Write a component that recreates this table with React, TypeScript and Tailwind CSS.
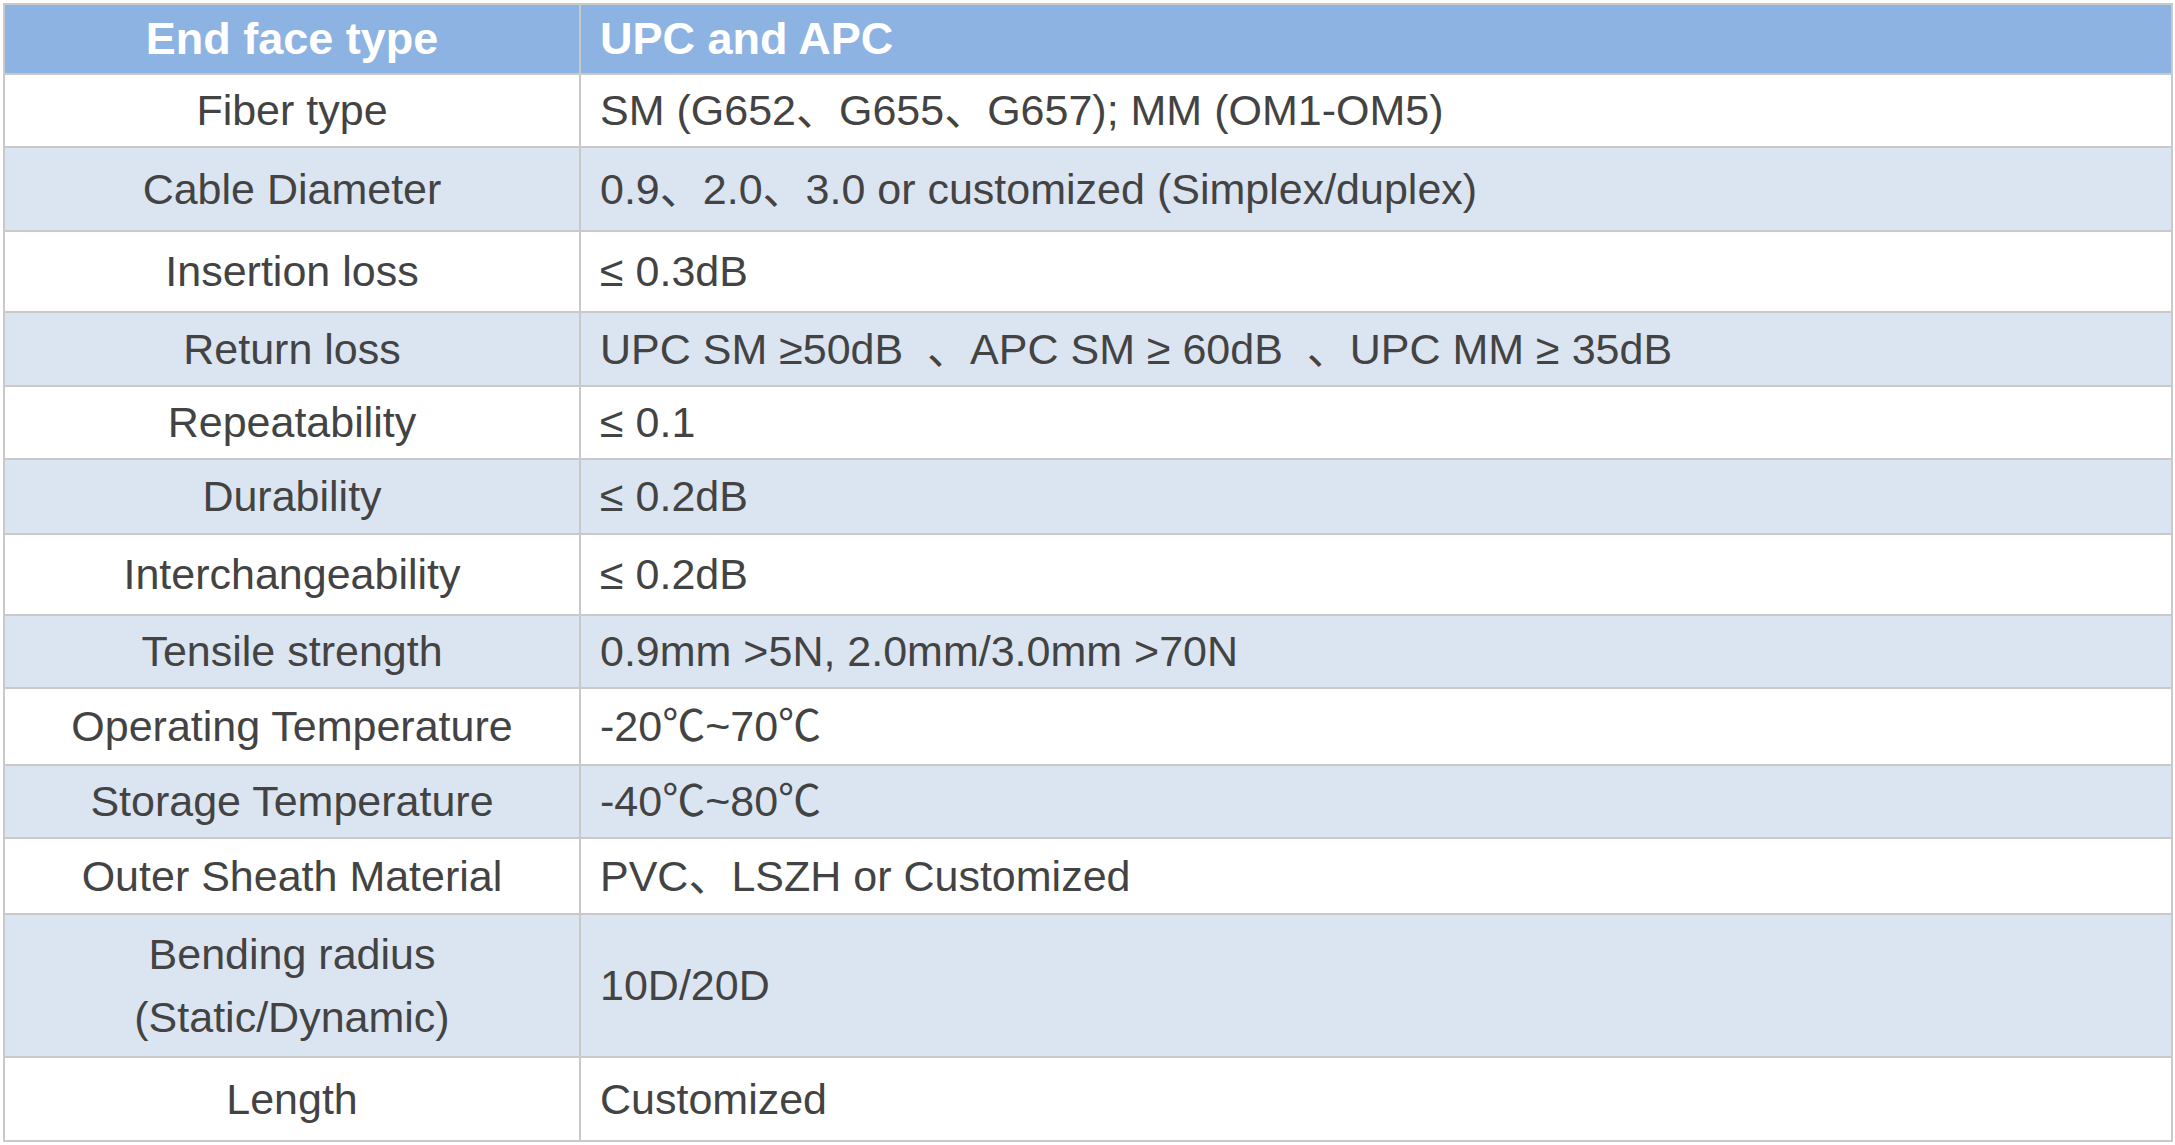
const rows: { label: string[]; value: string; h: string; alt: boolean }[] = [
  { label: ['Fiber type'], value: 'SM (G652、G655、G657); MM (OM1-OM5)', h: 'h-[73px]', alt: false },
  { label: ['Cable Diameter'], value: '0.9、2.0、3.0 or customized (Simplex/duplex)', h: 'h-[84px]', alt: true },
  { label: ['Insertion loss'], value: '≤ 0.3dB', h: 'h-[81px]', alt: false },
  { label: ['Return loss'], value: 'UPC SM ≥50dB  、APC SM ≥ 60dB  、UPC MM ≥ 35dB', h: 'h-[74px]', alt: true },
  { label: ['Repeatability'], value: '≤ 0.1', h: 'h-[73px]', alt: false },
  { label: ['Durability'], value: '≤ 0.2dB', h: 'h-[75px]', alt: true },
  { label: ['Interchangeability'], value: '≤ 0.2dB', h: 'h-[81px]', alt: false },
  { label: ['Tensile strength'], value: '0.9mm >5N, 2.0mm/3.0mm >70N', h: 'h-[73px]', alt: true },
  { label: ['Operating Temperature'], value: '-20℃~70℃', h: 'h-[77px]', alt: false },
  { label: ['Storage Temperature'], value: '-40℃~80℃', h: 'h-[73px]', alt: true },
  { label: ['Outer Sheath Material'], value: 'PVC、LSZH or Customized', h: 'h-[76px]', alt: false },
  { label: ['Bending radius', '(Static/Dynamic)'], value: '10D/20D', h: 'h-[143px]', alt: true },
  { label: ['Length'], value: 'Customized', h: 'h-[84px]', alt: false },
];

const font = "font-['Liberation_Sans','Noto_Sans_CJK_SC',sans-serif]";

export default function App() {
  return (
    <div className={`w-[2175px] h-[1145px] bg-white pl-[3px] pt-[3px] ${font}`}>
      <div className="w-[2170px] border-2 border-b-0 border-[#c9c9c9]">
        {/* header */}
        <div className="flex h-[70px] bg-[#8db3e2] border-b-2 border-[#c9c9c9] text-white font-bold text-[45px]">
          <div className="w-[576px] flex items-center justify-center border-r-2 border-[#c9c9c9] whitespace-nowrap">
            End face type
          </div>
          <div className="flex-1 flex items-center pl-[19px] whitespace-nowrap">UPC and APC</div>
        </div>

        {rows.map((r) => (
          <div
            key={r.label[0]}
            className={`flex ${r.h} border-b-2 border-[#c9c9c9] text-[43px] text-[#434343] ${
              r.alt ? 'bg-[#dbe5f1]' : 'bg-white'
            }`}
          >
            <div className="w-[576px] flex flex-col items-center justify-center border-r-2 border-[#c9c9c9] leading-[63px] whitespace-nowrap">
              {r.label.map((l) => (
                <span key={l}>{l}</span>
              ))}
            </div>
            <div className="flex-1 flex items-center pl-[19px] whitespace-pre">{r.value}</div>
          </div>
        ))}
      </div>
    </div>
  );
}
